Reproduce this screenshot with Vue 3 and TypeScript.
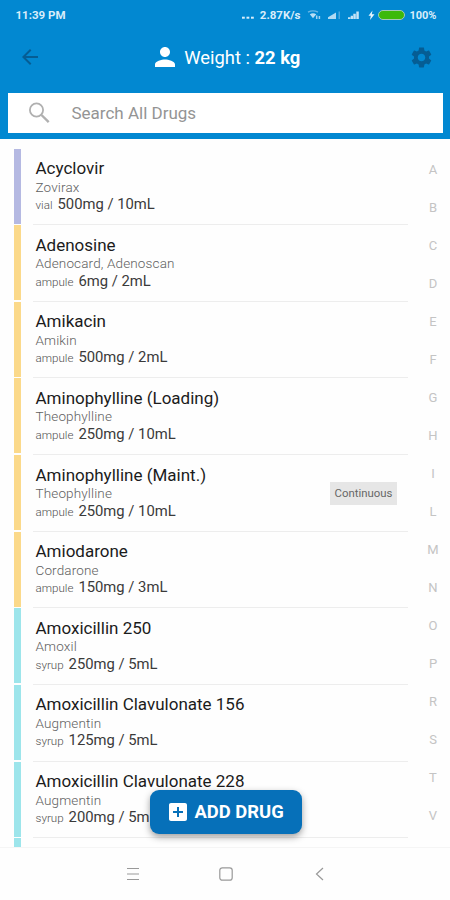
<script setup lang="ts">
interface Drug {
  name: string
  brand: string
  form: string
  dose: string
  kind: 'vial' | 'ampule' | 'syrup'
  tag?: string
}

const drugs: Drug[] = [
  { name: 'Acyclovir', brand: 'Zovirax', form: 'vial', dose: '500mg / 10mL', kind: 'vial' },
  { name: 'Adenosine', brand: 'Adenocard, Adenoscan', form: 'ampule', dose: '6mg / 2mL', kind: 'ampule' },
  { name: 'Amikacin', brand: 'Amikin', form: 'ampule', dose: '500mg / 2mL', kind: 'ampule' },
  { name: 'Aminophylline (Loading)', brand: 'Theophylline', form: 'ampule', dose: '250mg / 10mL', kind: 'ampule' },
  { name: 'Aminophylline (Maint.)', brand: 'Theophylline', form: 'ampule', dose: '250mg / 10mL', kind: 'ampule', tag: 'Continuous' },
  { name: 'Amiodarone', brand: 'Cordarone', form: 'ampule', dose: '150mg / 3mL', kind: 'ampule' },
  { name: 'Amoxicillin 250', brand: 'Amoxil', form: 'syrup', dose: '250mg / 5mL', kind: 'syrup' },
  { name: 'Amoxicillin Clavulonate 156', brand: 'Augmentin', form: 'syrup', dose: '125mg / 5mL', kind: 'syrup' },
  { name: 'Amoxicillin Clavulonate 228', brand: 'Augmentin', form: 'syrup', dose: '200mg / 5mL', kind: 'syrup' },
]

const letters: string[] = [...'ABCDEFGHILMNOPRSTV']
</script>

<template>
  <div class="screen">
    <header class="header">
      <div class="status">
        <span class="time">11:39 PM</span>
        <svg class="dots" width="14" height="12" viewBox="0 0 14 12" fill="#d9edfa">
          <rect x="1" y="7.7" width="2.8" height="2" /><rect x="5.5" y="7.7" width="2.8" height="2" /><rect x="10" y="7.7" width="2.8" height="2" />
        </svg>
        <span class="speed">2.87K/s</span>
        <svg class="wifi" width="14" height="12" viewBox="0 0 14 12" fill="none">
          <path d="M1 3.2Q6 .6 11 3.2" stroke="#6bb6e4" stroke-width="1.4" />
          <path d="M2.8 5.3Q6 3.4 9.2 5.3L6 9.2Z" fill="#b9def5" />
          <path d="M9.7 6.5v3.5M12.4 7v3" stroke="#a5d4f1" stroke-width="1.5" />
        </svg>
        <svg class="signal one" width="15" height="12" viewBox="0 0 15 12">
          <path d="M1 10V8.300L9 3.500V10Z" fill="#b0daf3" /><path d="M11.500 2.500h1.500v7.500h-1.500Z" fill="#4ba7dd" />
        </svg>
        <svg class="signal two" width="14" height="12" viewBox="0 0 14 12" fill="#c5e4f7">
          <path d="M1 10V8.200h2.400V10ZM3.700 10V6.800h2.300V10ZM6.300 10V4.800h2.500V10ZM9.300 10V2.500h2.500V10Z" />
        </svg>
        <svg class="bolt" width="7" height="12" viewBox="0 0 7 12"><path d="M4.500 1.500L.5 6.700h2.300L2 11l4.500-5.700H3.800Z" fill="#e5f4fd" /></svg>
        <span class="battery"></span>
        <span class="percent">100%</span>
      </div>
      <div class="toolbar">
        <svg class="back" width="24" height="24" viewBox="0 0 24 24"><path d="M20 11H7.83l5.59-5.59L12 4l-8 8 8 8 1.41-1.41L7.83 13H20v-2z" fill="#055d94" /></svg>
        <div class="weight">
          <svg width="30" height="30" viewBox="0 0 24 24"><path d="M12 12c2.21 0 4-1.79 4-4s-1.79-4-4-4-4 1.79-4 4 1.790 4 4 4zm0 2c-2.670 0-8 1.340-8 4v2h16v-2c0-2.660-5.330-4-8-4z" fill="#fff" /></svg>
          <span class="label">Weight : <b>22 kg</b></span>
        </div>
        <svg class="gear" width="25" height="25" viewBox="0 0 24 24"><path d="M19.140 12.940c.04-.3.06-.61.06-.94 0-.32-.02-.64-.07-.94l2.030-1.580c.18-.14.23-.41.12-.61l-1.920-3.320c-.12-.22-.37-.29-.59-.22l-2.390.96c-.5-.38-1.030-.7-1.620-.94l-.36-2.540c-.04-.24-.24-.41-.48-.41h-3.840c-.24 0-.43.17-.47.41l-.36 2.540c-.59.24-1.130.57-1.620.94l-2.390-.96c-.22-.08-.47 0-.59.22L2.740 8.870c-.12.21-.08.47.12.61l2.030 1.580c-.05.3-.09.63-.09.94s.02.64.07.94l-2.030 1.580c-.18.14-.23.41-.12.61l1.920 3.320c.12.22.37.29.59.22l2.390-.96c.5.38 1.030.7 1.620.94l.36 2.540c.05.24.24.41.48.41h3.840c.24 0 .44-.17.47-.41l.36-2.540c.59-.24 1.130-.56 1.620-.94l2.390.96c.22.08.47 0 .59-.22l1.920-3.320c.12-.22.07-.47-.12-.61l-2.010-1.580zM12 15.600c-1.980 0-3.600-1.620-3.600-3.600s1.620-3.600 3.600-3.600 3.600 1.620 3.600 3.600-1.620 3.600-3.600 3.600z" fill="#055d94" /></svg>
      </div>
      <div class="search">
        <svg width="28" height="28" viewBox="0 0 28 28" fill="none" stroke="#b0b0b0"><circle cx="11.500" cy="11" r="6.600" stroke-width="1.800" /><path d="M16.500 16l7.200 7.200" stroke-width="2.400" /></svg>
        <span>Search All Drugs</span>
      </div>
    </header>

    <main class="content">
      <ul class="list">
        <li v-for="drug in drugs" :key="drug.name" class="row">
          <span class="bar" :class="drug.kind"></span>
          <div class="info">
            <div class="text">
              <div class="name">{{ drug.name }}</div>
              <div class="brand">{{ drug.brand }}</div>
              <div class="strength"><span class="form">{{ drug.form }}</span><span class="dose">{{ drug.dose }}</span></div>
            </div>
            <span v-if="drug.tag" class="tag">{{ drug.tag }}</span>
          </div>
        </li>
        <li class="row"><span class="bar syrup"></span><div class="info"></div></li>
      </ul>
      <nav class="index"><span v-for="letter in letters" :key="letter">{{ letter }}</span></nav>
      <button class="add">
        <svg width="24" height="24" viewBox="0 0 24 24"><path d="M19 3H5c-1.110 0-2 .9-2 2v14c0 1.100.89 2 2 2h14c1.100 0 2-.9 2-2V5c0-1.100-.9-2-2-2zm-2 10h-4v4h-2v-4H7v-2h4V7h2v4h4v2z" fill="#fff" /></svg>
        <span>ADD DRUG</span>
      </button>
    </main>

    <footer class="navbar">
      <svg width="16" height="16" viewBox="0 0 16 16" fill="none" stroke="#999" stroke-width="1.100"><path d="M2 2.500h12M2 8h12M2 13.500h12" /></svg>
      <svg width="16" height="16" viewBox="0 0 16 16" fill="none" stroke="#999" stroke-width="1.200"><rect x="1.800" y="1.800" width="12.400" height="12.400" rx="2.500" /></svg>
      <svg width="16" height="16" viewBox="0 0 16 16" fill="none" stroke="#999" stroke-width="1.200"><path d="M12 2L5.500 8l6.500 6" /></svg>
    </footer>
  </div>
</template>

<style>
body {
  margin: 0;
  background: #fefefe;
}
</style>

<style scoped>
.screen {
  width: 450px;
  height: 900px;
  display: flex;
  flex-direction: column;
  overflow: hidden;
  background: #fefefe;
  font-family: Roboto, "Liberation Sans", sans-serif;
}
svg {
  display: block;
  flex: none;
}
span,
.name,
.brand {
  white-space: nowrap;
}
.header {
  flex: none;
  height: 139px;
  box-sizing: border-box;
  background: #0288d1;
}
.status {
  height: 30px;
  box-sizing: border-box;
  padding: 0 13.500px 0 15.500px;
  display: flex;
  align-items: center;
  color: #d9edfa;
  font-size: 11.500px;
  font-weight: 700;
}
.time {
  margin-right: auto;
}
.speed {
  margin-left: 5px;
}
.wifi {
  margin-left: 7px;
}
.signal.one {
  margin-left: 6px;
}
.signal.two {
  margin-left: 5px;
}
.bolt {
  margin-left: 7px;
}
.battery {
  width: 27px;
  height: 10px;
  margin: 0 4px 0 3px;
  box-sizing: border-box;
  border: 1px solid #a5c9b5;
  border-radius: 5px;
  background: #3cb90a;
}
.percent {
  font-size: 11px;
}
.toolbar {
  height: 63px;
  box-sizing: border-box;
  padding: 0 16px 9px 18px;
  display: flex;
  align-items: center;
  justify-content: space-between;
}
.weight {
  display: flex;
  align-items: center;
  gap: 4.500px;
  margin-right: 1px;
  color: #fff;
  font-size: 18.400px;
}
.search {
  height: 40px;
  margin: 0 7px 0 8px;
  padding-left: 17px;
  box-sizing: border-box;
  display: flex;
  align-items: center;
  gap: 18.500px;
  background: #fff;
  color: #949494;
  font-size: 17px;
}
.content {
  position: relative;
  flex: none;
  height: 708px;
  display: flex;
  overflow: hidden;
}
.list {
  flex: none;
  width: 408px;
  margin: 0;
  padding: 9.500px 0 0 14px;
  box-sizing: border-box;
  list-style: none;
}
.row {
  height: 76.650px;
  display: flex;
  gap: 12px;
}
.bar {
  width: 6.500px;
  height: 75px;
  flex: none;
}
.bar.vial {
  background: #b5b9e2;
}
.bar.ampule {
  background: #fbd98a;
}
.bar.syrup {
  background: #9de5eb;
}
.info {
  flex: 1;
  height: 76.650px;
  box-sizing: border-box;
  padding: 9.500px 11px 0 3px;
  border-bottom: 1px solid #ededed;
  display: flex;
  justify-content: space-between;
}
.name {
  height: 20.500px;
  line-height: 20px;
  font-size: 17px;
  color: #1b1b1b;
}
.brand {
  height: 16.500px;
  line-height: 17px;
  font-size: 13.500px;
  font-weight: 300;
  letter-spacing: 0.140px;
  color: #606060;
}
.strength {
  display: flex;
  align-items: baseline;
  gap: 5px;
  height: 18px;
  line-height: 18px;
}
.form {
  font-size: 11.600px;
  font-weight: 300;
  color: #505050;
}
.dose {
  font-size: 14.800px;
  color: #3a3a3a;
}
.tag {
  height: 23px;
  margin-top: 17px;
  padding: 0 4.500px;
  line-height: 23px;
  background: #e6e6e6;
  color: #666;
  font-size: 11.400px;
}
.index {
  width: 24px;
  margin: 12px 0 0 13px;
  display: flex;
  flex-direction: column;
  align-items: center;
  font-size: 13px;
  color: #c4c4c4;
}
.index span {
  flex: none;
  height: 38px;
  line-height: 38px;
}
.add {
  position: absolute;
  left: 149.500px;
  top: 650.500px;
  width: 152px;
  height: 44.500px;
  padding: 0 0 0 16px;
  border: 0;
  border-radius: 9px;
  display: flex;
  align-items: center;
  gap: 5px;
  background: #0670b9;
  box-shadow: 0 3px 7px rgba(0, 0, 0, 0.38);
  color: #fff;
  font: 700 18.400px Roboto, "Liberation Sans", sans-serif;
}
.navbar {
  flex: 1;
  display: flex;
  align-items: center;
  justify-content: center;
  gap: 77px;
  padding-left: 1px;
  border-top: 1px solid #f5f5f5;
}
</style>
